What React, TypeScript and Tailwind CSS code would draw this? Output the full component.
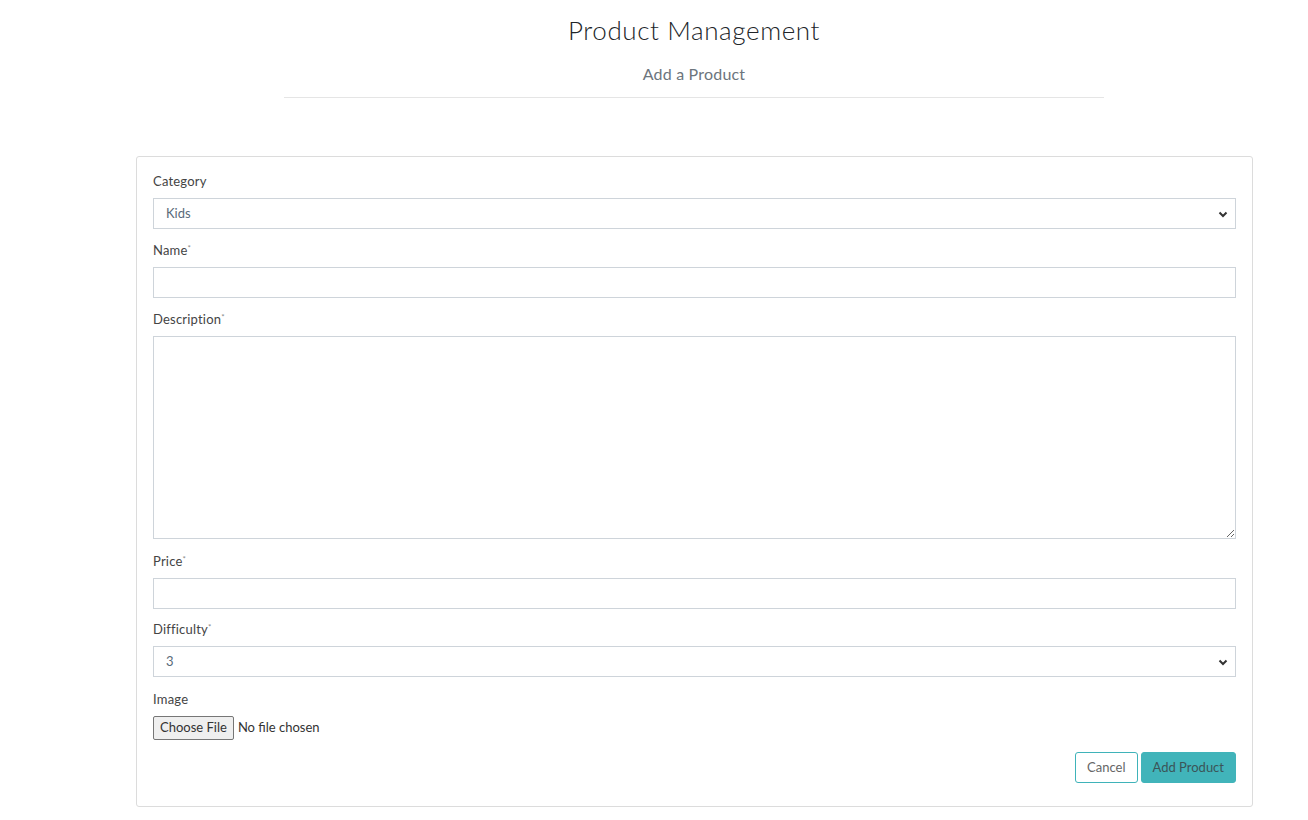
import { useState } from "react";

const labelCls = "block h-[18px] text-[13px] text-[#444] mb-[8px] leading-[18px] tracking-[0.2px]";
const inputCls =
  "block w-full h-[31px] border border-[#ced4da] bg-white px-3 text-[13px] text-[#5a6a7a] outline-none";

function Chevron() {
  return (
    <svg
      className="pointer-events-none absolute right-[8px] top-1/2 -translate-y-1/2"
      width="10"
      height="8"
      viewBox="0 0 10 8"
    >
      <path d="M1.5 2.5 L5 6 L8.5 2.5" fill="none" stroke="#333" strokeWidth="2" />
    </svg>
  );
}

function Select({ value, options }: { value: string; options: string[] }) {
  const [v, setV] = useState(value);
  return (
    <div className="relative">
      <select
        value={v}
        onChange={(e) => setV(e.target.value)}
        className={inputCls + " appearance-none"}
      >
        {options.map((o) => (
          <option key={o}>{o}</option>
        ))}
      </select>
      <Chevron />
    </div>
  );
}

const Req = () => (
  <span className="relative -top-[4px] text-[8px] leading-none text-[#888]">*</span>
);

export default function App() {
  return (
    <div
      className="min-h-screen bg-white pl-[80px]"
      style={{ fontFamily: "Lato, 'Open Sans', sans-serif" }}
    >
      <div className="flex flex-col items-center pt-[13px]">
        <h1 className="text-[26px] leading-[34px] text-[#212529] font-light tracking-[0.6px]">
          Product Management
        </h1>
        <p className="mt-[16px] text-[16px] leading-[22px] text-[#6c757d] tracking-[0.2px]">
          Add a Product
        </p>
        <div className="mt-[12px] w-[820px] border-t border-[#e5e5e5]" />
      </div>

      <div className="mx-[56px] mt-[58px] mr-[55px] rounded-[3px] border border-[#dcdcdc] px-4 pt-[15px] pb-[23px]">
        <label className={labelCls}>Category</label>
        <Select value="Kids" options={["Kids", "Adults", "Family"]} />

        <label className={labelCls + " mt-[12px]"}>
          Name<Req />
        </label>
        <input type="text" className={inputCls} />

        <label className={labelCls + " mt-[12px]"}>
          Description<Req />
        </label>
        <textarea className="block w-full h-[203px] border border-[#ced4da] bg-white px-3 py-2 text-[13px] outline-none" />

        <label className={labelCls + " mt-[13px]"}>
          Price<Req />
        </label>
        <input type="text" className={inputCls} />

        <label className={labelCls + " mt-[11px]"}>
          Difficulty<Req />
        </label>
        <Select value="3" options={["1", "2", "3", "4", "5"]} />

        <label className={labelCls + " mt-[13px]"}>Image</label>
        <input
          type="file"
          className="block h-[24px] text-[13px] text-[#333] file:mr-[4px] file:h-[24px] file:rounded-[2px] file:border file:border-solid file:border-[#767676] file:bg-[#efefef] file:px-[6px] file:text-[13px] file:text-[#333]"
        />

        <div className="mt-[12px] flex justify-end gap-[3px]">
          <button className="h-[31px] rounded-[3px] border border-[#3fb3b9] bg-white px-[11px] text-[13px] text-[#666]">
            Cancel
          </button>
          <button className="h-[31px] rounded-[3px] border border-[#41b4ba] bg-[#41b4ba] px-[11px] text-[13px] text-[#3b5458]">
            Add Product
          </button>
        </div>
      </div>
    </div>
  );
}
